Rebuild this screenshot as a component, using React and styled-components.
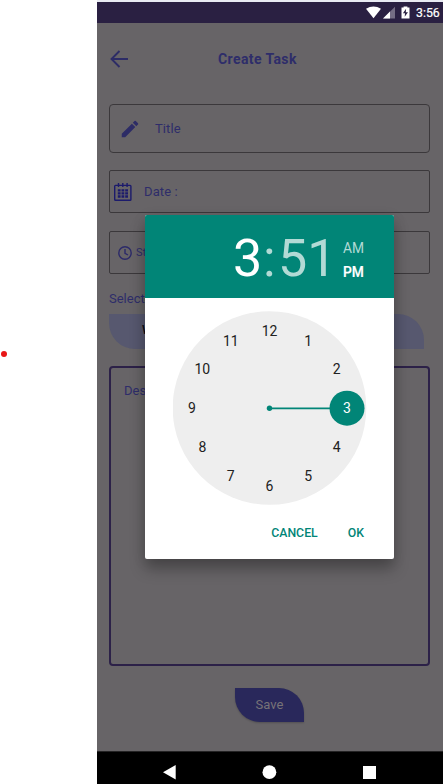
import React from 'react';
import styled, { createGlobalStyle } from 'styled-components';

const GlobalStyle = createGlobalStyle`
  * { box-sizing: border-box; }
  body { margin: 0; background: #fff; font-family: Roboto, sans-serif; overflow: hidden; }
  svg { display: block; flex: none; }
`;

const Stage = styled.div`
  display: flex;
  width: 443px;
  height: 784px;
`;
const Margin = styled.aside`
  width: 97px;
  padding-top: 351px;
`;
const RedDot = styled.div`
  width: 6px;
  height: 6px;
  margin-left: 1px;
  border-radius: 50%;
  background: #e81616;
`;
const Phone = styled.main`
  position: relative;
  display: flex;
  flex-direction: column;
  width: 346px;
  height: 784px;
  border-top: 2px solid #e9ebf3;
  background: #676467;
`;
const StatusBar = styled.header`
  display: flex;
  align-items: center;
  justify-content: flex-end;
  height: 21px;
  padding-right: 3px;
  background: #2a2042;
  color: #fff;
  font-size: 12.3px;
  line-height: 21px;
  font-weight: 400;
  -webkit-text-stroke: 0.2px #fff;
  span { width: 24px; margin-left: 5px; padding-top: 1px; white-space: nowrap; }
`;
const Screen = styled.section`
  flex: 1;
  padding: 0 13px 0 12px;
  color: #2e2d6a;
`;
const TitleBar = styled.div`
  display: flex;
  align-items: center;
  height: 72px;
  margin-bottom: 9px;
  padding-left: 1px;
  h1 {
    margin: 0 0 0 90px;
    font-size: 14px;
    line-height: 18px;
    font-weight: 700;
    letter-spacing: 0.4px;
    white-space: nowrap;
  }
`;
const Field = styled.div`
  display: flex;
  align-items: center;
  height: ${p => p.$height}px;
  margin-bottom: ${p => p.$after}px;
  padding-left: ${p => p.$inset}px;
  gap: ${p => p.$gap}px;
  border: 1px solid #3b383b;
  border-radius: ${p => p.$radius || 2}px;
  font-size: ${p => p.$size || 13}px;
  letter-spacing: ${p => p.$track || 0}px;
`;
const SectionLabel = styled.div`
  height: 15px;
  margin-bottom: 8px;
  font-size: 13px;
  line-height: 15px;
`;
const Category = styled.div`
  display: flex;
  align-items: center;
  width: 315px;
  height: 35px;
  margin-bottom: 17px;
  padding: 0 0 3px 33px;
  border-radius: 0 26px 0 26px;
  background: #57586f;
  color: #080810;
  font-size: 12px;
  font-weight: 500;
`;
const Description = styled.div`
  height: 300px;
  padding: 14px 13px;
  border: 2px solid #2c2148;
  border-radius: 4px;
  font-size: 13px;
  line-height: 18px;
`;
const SaveButton = styled.button`
  display: block;
  width: 69px;
  height: 34px;
  margin: 22px 0 0 126px;
  padding: 0;
  border: 0;
  border-radius: 0 25px 0 25px;
  background: #29285b;
  box-shadow: 0 1px 2px #0003;
  color: #777377;
  font: 400 13px/34px Roboto, sans-serif;
  letter-spacing: 0.1px;
`;
const NavBar = styled.nav`
  height: 33px;
  border-top: 1px solid #252425;
  background: #000;
`;
const Dialog = styled.div`
  position: absolute;
  left: 48px;
  top: 213px;
  width: 249px;
  height: 344px;
  border-radius: 2px;
  background: #fff;
  overflow: hidden;
  z-index: 1;
`;
const DialogShadow = styled.div`
  position: absolute;
  left: 48px;
  top: 213px;
  width: 249px;
  height: 344px;
  border-radius: 2px;
  box-shadow: 0 10px 15px rgba(0, 0, 0, 0.28), 0 3px 14px rgba(0, 0, 0, 0.1);
`;
const TimeHeader = styled.div`
  display: flex;
  height: 83px;
  padding: 14px 0 0 88px;
  background: #018577;
  color: #fff;
`;
const Digits = styled.div`
  width: ${p => p.$width}px;
  height: 60px;
  font-size: 52px;
  line-height: 60px;
  color: ${p => (p.$active ? '#fff' : '#b2dad5')};
`;
const Meridiem = styled.div`
  display: flex;
  flex-direction: column;
  padding: 7px 0 0 13px;
  font-size: 13.8px;
  line-height: 24px;
  span { color: #b2dad5; }
  strong { font-weight: 500; font-size: 13.8px; -webkit-text-stroke: 0.2px #fff; }
`;
const ClockArea = styled.div`
  padding: 13px 0 0 28px;
`;
const Actions = styled.div`
  display: flex;
  justify-content: flex-end;
  gap: 30px;
  padding: 19px 30px 0 0;
`;
const Action = styled.button`
  padding: 0;
  border: 0;
  background: none;
  color: #018577;
  font: 500 12.3px/18px Roboto, sans-serif;
`;

const hours = Array.from({ length: 12 }, (_, i) => {
  const angle = ((i + 1) * Math.PI) / 6;
  return { n: i + 1, x: 96.5 + 77.5 * Math.sin(angle), y: 97.3 - 77.7 * Math.cos(angle) };
});

const Clock = () => (
  <svg width="194" height="194" viewBox="0 0 194 194" fontFamily="Roboto, sans-serif" fontSize="14" textAnchor="middle">
    <circle cx="96.5" cy="97" r="96.8" fill="#eee" />
    <path d="M96.5 97.3H174" stroke="#018577" strokeWidth="1.7" />
    <circle cx="96.5" cy="97.3" r="2.7" fill="#018577" />
    <circle cx="174" cy="97.2" r="17.5" fill="#018577" />
    {hours.map(h => (
      <text key={h.n} x={h.x} y={h.y + 5} fill={h.n === 3 ? '#fff' : '#212121'}>{h.n}</text>
    ))}
  </svg>
);

const StatusIcons = () => (
  <svg width="45" height="14" viewBox="0 0 45 14" fill="#fff">
    <path d="M0 2.8Q7.5-2 15 2.8L7.5 12.2Z" />
    <path d="M17 12.5L29 .7V12.5Z" opacity=".35" />
    <path d="M17 12.5L24 5.5V12.5Z" />
    <path d="M37.6 1.4V.4H41.4V1.4H43.5V12.5H35.5V1.4Z" />
    <path d="M40.1 2.8L36.9 7.3H39L38.7 10.8L42 6.2H39.8Z" fill="#2a2042" />
  </svg>
);
const BackIcon = () => (
  <svg width="18" height="18" viewBox="0 0 18 18" fill="none" stroke="#2d2c66" strokeWidth="1.9">
    <path d="M9.5 1L1.5 9L9.5 17M1.5 9H18" />
  </svg>
);
const PencilIcon = () => (
  <svg width="22" height="22" viewBox="0 0 24 24" fill="#2d2c66">
    <path d="M3 17.25V21h3.75L17.8 9.94l-3.75-3.75ZM20.7 7.04a1 1 0 0 0 0-1.41l-2.34-2.34a1 1 0 0 0-1.41 0l-1.83 1.83 3.75 3.75Z" />
  </svg>
);
const CalendarIcon = () => (
  <svg width="18" height="18" viewBox="0 0 18 18" fill="none" stroke="#1c1b6c">
    <rect x=".7" y="2.4" width="16.2" height="14.8" rx=".8" strokeWidth="1.4" />
    <path d="M4.5 0V4M8.8 0V4M13.1 0V4" strokeWidth="1.4" />
    <path d="M3.8 7.3H14M3.8 10.4H14M3.8 13.5H14" strokeWidth="2.3" strokeDasharray="2.8 .9" />
  </svg>
);
const TimeIcon = () => (
  <svg width="14" height="14" viewBox="0 0 14 14" fill="none" stroke="#2c2a69" strokeWidth="1.4">
    <circle cx="7" cy="7" r="6.2" />
    <path d="M7 3V7.3L10 9" />
  </svg>
);
const NavIcons = () => (
  <svg width="346" height="32" viewBox="0 1 346 32" fill="#fff">
    <path d="M66 21.2L78.7 14V28.4Z" />
    <circle cx="172.4" cy="21.2" r="6.9" />
    <rect x="266" y="15" width="13" height="13" />
  </svg>
);

export default function App() {
  return (
    <>
      <GlobalStyle />
      <Stage>
        <Margin><RedDot /></Margin>
        <Phone>
          <StatusBar><StatusIcons /><span>3:56</span></StatusBar>
          <Screen>
            <TitleBar><BackIcon /><h1>Create Task</h1></TitleBar>
            <Field $height={49} $after={17} $inset={9} $gap={14} $radius={4} $track={0.1}><PencilIcon />Title</Field>
            <Field $height={43} $after={18} $inset={4} $gap={12} $track={0.1}><CalendarIcon />Date :</Field>
            <Field $height={43} $after={17} $inset={8} $gap={4} $size={11}><TimeIcon />Start</Field>
            <SectionLabel>Select</SectionLabel>
            <Category>W</Category>
            <Description>Description</Description>
            <SaveButton>Save</SaveButton>
          </Screen>
          <NavBar><NavIcons /></NavBar>
          <DialogShadow />
          <Dialog>
            <TimeHeader>
              <Digits $width={30} $active>3</Digits>
              <Digits $width={15}>:</Digits>
              <Digits $width={52}>51</Digits>
              <Meridiem><span>AM</span><strong>PM</strong></Meridiem>
            </TimeHeader>
            <ClockArea><Clock /></ClockArea>
            <Actions><Action>CANCEL</Action><Action>OK</Action></Actions>
          </Dialog>
        </Phone>
      </Stage>
    </>
  );
}
